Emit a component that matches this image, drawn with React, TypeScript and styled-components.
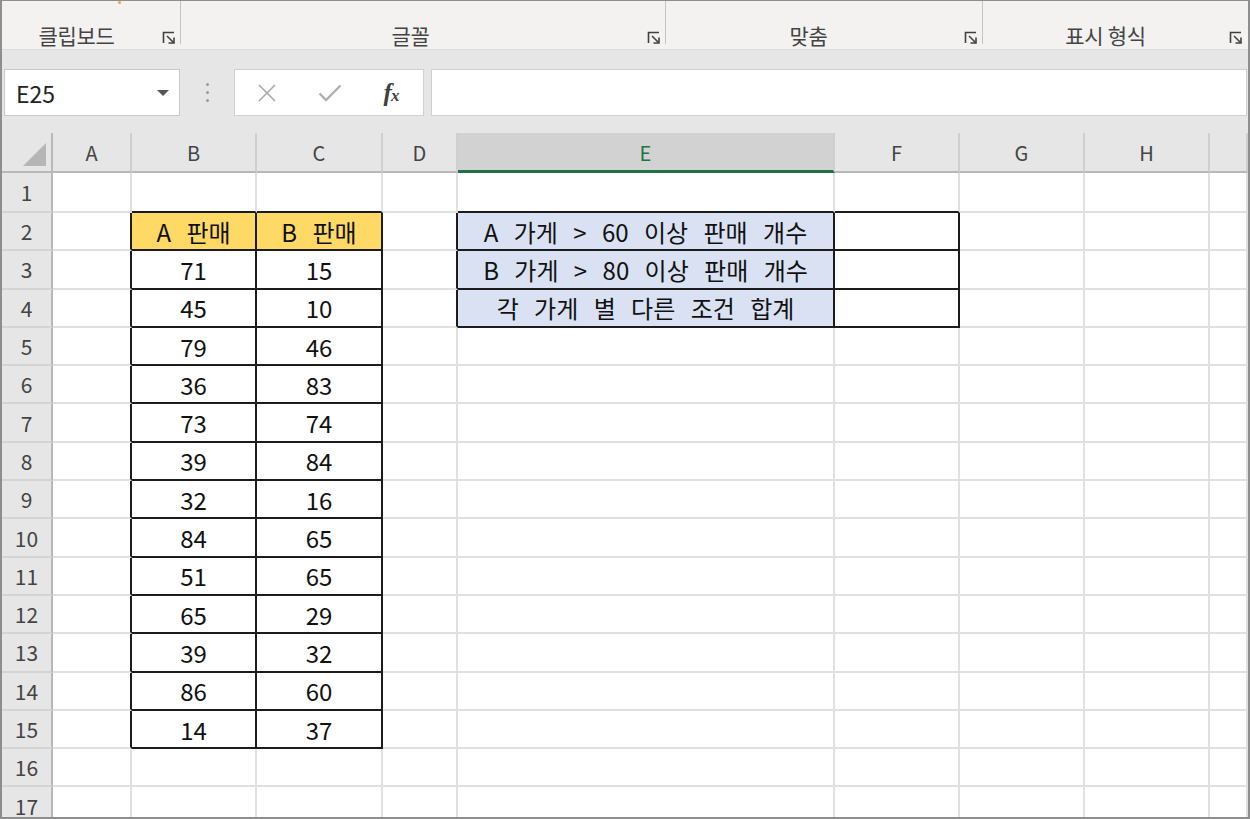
import React from "react";
import styled, { createGlobalStyle } from "styled-components";

const GlobalStyle = createGlobalStyle`
  html, body { margin: 0; padding: 0; background: #ffffff; }
  body { font-family: "Noto Sans CJK KR", "Noto Sans", sans-serif; }
  * { box-sizing: border-box; }
`;

const FONT = `"Noto Sans CJK KR", "Noto Sans", sans-serif`;

const Frame = styled.div`
  width: 1250px;
  height: 819px;
  border: 2px solid #8e8e8e;
  border-top-width: 1px;
  overflow: hidden;
  display: flex;
  flex-direction: column;
  background: #ffffff;
`;

const Ribbon = styled.div`
  position: relative;
  height: 49px;
  flex: none;
  display: flex;
  background: #f3f2f1;
  border-bottom: 1px solid #dcdcdc;
`;

const Mark = styled.span`
  position: absolute;
  left: 116px;
  top: 0;
  width: 3px;
  height: 3px;
  border-radius: 50%;
  background: #f0a050;
`;

const Group = styled.div<{ $w?: number }>`
  position: relative;
  flex: ${(p) => (p.$w ? `0 0 ${p.$w}px` : "1 1 auto")};
  display: flex;
  align-items: flex-end;
  justify-content: center;
  padding: 0 28px 2px 0;
  height: 48px;
  &::after {
    content: "";
    position: absolute;
    right: 0;
    top: 0;
    height: 43px;
    width: 1px;
    background: #c4c4c4;
  }
  &:last-child::after { display: none; }
`;

const GroupLabel = styled.span<{ $shift?: number }>`
  font-family: ${FONT};
  font-size: 21px;
  line-height: 24px;
  letter-spacing: -0.3px;
  color: #444444;
  transform: translateX(${(p) => p.$shift ?? 0}px);
`;

const Launcher = styled.svg`
  position: absolute;
  right: 5px;
  bottom: 4px;
`;

const FormulaBar = styled.div`
  height: 83px;
  flex: none;
  display: flex;
  align-items: flex-start;
  padding: 19px 0 0 2px;
  background: #e6e6e6;
`;

const NameBox = styled.div`
  width: 176px;
  height: 47px;
  background: #ffffff;
  border: 1px solid #c8c8c8;
  display: flex;
  align-items: center;
  justify-content: space-between;
  padding: 0 10px 0 11px;
  font-family: ${FONT};
  font-size: 23px;
  color: #222222;
`;

const DropTri = styled.span`
  width: 0;
  height: 0;
  border-left: 6px solid transparent;
  border-right: 6px solid transparent;
  border-top: 6px solid #555555;
`;

const DotsBox = styled.div`
  width: 54px;
  height: 47px;
  display: flex;
  flex-direction: column;
  align-items: center;
  justify-content: center;
  gap: 5px;
`;

const Dot = styled.span`
  width: 3px;
  height: 3px;
  border-radius: 50%;
  background: #9a9a9a;
`;

const ButtonsBox = styled.div`
  width: 190px;
  height: 47px;
  background: #ffffff;
  border: 1px solid #d0d0d0;
  display: grid;
  grid-template-columns: 64px 62px 1fr;
  align-items: center;
  justify-items: center;
`;

const Fx = styled.span`
  font-family: "Liberation Serif", "DejaVu Serif", serif;
  font-style: italic;
  font-weight: bold;
  font-size: 25px;
  color: #404040;
  letter-spacing: -1px;
  margin-right: 2px;
  & small { font-size: 17px; }
`;

const FormulaInput = styled.div`
  flex: 1;
  height: 47px;
  margin-left: 7px;
  margin-right: 1px;
  background: #ffffff;
  border: 1px solid #d0d0d0;
`;

const Sheet = styled.div`
  flex: 1;
  display: grid;
  grid-template-columns: 51px 79px 125px 126px 75px 377px 125px 125px 125px 1fr;
  grid-template-rows: 40px 40px repeat(16, 38.3px);
  align-content: start;
`;

const Corner = styled.div`
  position: relative;
  background: #e6e6e6;
  border-right: 2px solid #b8b8b8;
  border-bottom: 2px solid #b8b8b8;
`;

const CornerTri = styled.span`
  position: absolute;
  right: 5px;
  bottom: 5px;
  width: 0;
  height: 0;
  border-left: 23px solid transparent;
  border-bottom: 23px solid #b6b6b6;
`;

const ColHead = styled.div<{ $sel?: boolean }>`
  background: ${(p) => (p.$sel ? "#d2d2d2" : "#e6e6e6")};
  border-right: 2px solid #cfcfcf;
  border-bottom: ${(p) => (p.$sel ? "3px solid #217346" : "2px solid #b8b8b8")};
  display: flex;
  align-items: center;
  justify-content: center;
  padding-top: ${(p) => (p.$sel ? "1px" : "0")};
  font-family: ${FONT};
  font-size: 20px;
  color: ${(p) => (p.$sel ? "#217346" : "#444444")};
`;

const RowHead = styled.div`
  background: #e6e6e6;
  border-right: 2px solid #b8b8b8;
  border-bottom: 2px solid #d4d4d4;
  display: flex;
  align-items: center;
  justify-content: center;
  font-family: ${FONT};
  font-size: 21px;
  color: #444444;
`;

const Cell = styled.div<{ $fill?: string; $rd?: boolean; $bd?: boolean }>`
  background: ${(p) => p.$fill ?? "#ffffff"};
  border-right: 2px solid ${(p) => (p.$rd ? "#1c1c1c" : "#e0e0e0")};
  border-bottom: 2px solid ${(p) => (p.$bd ? "#1c1c1c" : "#e0e0e0")};
  display: flex;
  align-items: center;
  justify-content: center;
  font-family: ${FONT};
  font-size: 24px;
  color: #111111;
  white-space: nowrap;
  word-spacing: 10px;
  overflow: hidden;
`;

const COLS = ["A", "B", "C", "D", "E", "F", "G", "H", ""];

const bVals = [71, 45, 79, 36, 73, 39, 32, 84, 51, 65, 39, 86, 14];
const cVals = [15, 10, 46, 83, 74, 84, 16, 65, 65, 29, 32, 60, 37];

const eTexts: Record<number, string> = {
  2: "A 가게 > 60 이상 판매 개수",
  3: "B 가게 > 80 이상 판매 개수",
  4: "각 가게 별 다른 조건 합계",
};

const boxed = (c: number, r: number) =>
  ((c === 1 || c === 2) && r >= 2 && r <= 15) || ((c === 4 || c === 5) && r >= 2 && r <= 4);

function cellContent(c: number, r: number): { text?: string | number; fill?: string } {
  if (r === 2 && c === 1) return { text: "A 판매", fill: "#ffd966" };
  if (r === 2 && c === 2) return { text: "B 판매", fill: "#ffd966" };
  if (r >= 3 && r <= 15 && c === 1) return { text: bVals[r - 3] };
  if (r >= 3 && r <= 15 && c === 2) return { text: cVals[r - 3] };
  if (c === 4 && eTexts[r]) return { text: eTexts[r], fill: "#d9e1f2" };
  return {};
}

const LauncherIcon = () => (
  <Launcher width="14" height="14" viewBox="0 0 14 14">
    <path d="M1.5 12 V1.5 H12" fill="none" stroke="#404040" strokeWidth="1.6" />
    <path d="M5 5 L11.5 11.5" stroke="#404040" strokeWidth="1.6" />
    <path d="M6.5 12 H12 V6.5" fill="none" stroke="#404040" strokeWidth="1.6" />
  </Launcher>
);

export default function App() {
  const rows = Array.from({ length: 17 }, (_, i) => i + 1);
  return (
    <>
      <GlobalStyle />
      <Frame>
        <Ribbon>
          <Mark />
          <Group $w={179}>
            <GroupLabel $shift={-1}>클립보드</GroupLabel>
            <LauncherIcon />
          </Group>
          <Group $w={485}>
            <GroupLabel $shift={1}>글꼴</GroupLabel>
            <LauncherIcon />
          </Group>
          <Group $w={317}>
            <GroupLabel $shift={-2}>맞춤</GroupLabel>
            <LauncherIcon />
          </Group>
          <Group>
            <GroupLabel $shift={4}>표시 형식</GroupLabel>
            <LauncherIcon />
          </Group>
        </Ribbon>
        <FormulaBar>
          <NameBox>
            <span>E25</span>
            <DropTri />
          </NameBox>
          <DotsBox>
            <Dot />
            <Dot />
            <Dot />
          </DotsBox>
          <ButtonsBox>
            <svg width="18" height="18" viewBox="0 0 18 18">
              <path d="M1 1 L17 17 M17 1 L1 17" stroke="#a8a8a8" strokeWidth="1.6" />
            </svg>
            <svg width="24" height="18" viewBox="0 0 24 18">
              <path d="M1.5 9.5 L8 16 L22.5 1.5" fill="none" stroke="#b0b0b0" strokeWidth="2.4" />
            </svg>
            <Fx>
              f<small>x</small>
            </Fx>
          </ButtonsBox>
          <FormulaInput />
        </FormulaBar>
        <Sheet>
          <Corner>
            <CornerTri />
          </Corner>
          {COLS.map((c, i) => (
            <ColHead key={`h${i}`} $sel={c === "E"}>
              {c}
            </ColHead>
          ))}
          {rows.map((r) => (
            <React.Fragment key={r}>
              <RowHead>{r}</RowHead>
              {COLS.map((_, c) => {
                const { text, fill } = cellContent(c, r);
                return (
                  <Cell
                    key={c}
                    $fill={fill}
                    $rd={boxed(c, r) || boxed(c + 1, r)}
                    $bd={boxed(c, r) || boxed(c, r + 1)}
                  >
                    {text}
                  </Cell>
                );
              })}
            </React.Fragment>
          ))}
        </Sheet>
      </Frame>
    </>
  );
}
